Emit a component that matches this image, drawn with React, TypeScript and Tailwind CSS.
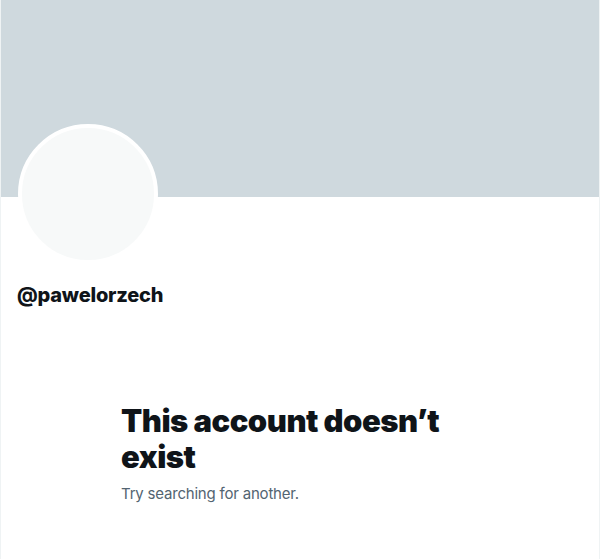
export default function App() {
  return (
    <div
      className="min-h-[559px] w-[600px] border-x border-[#eff3f4] bg-white"
      style={{ fontFamily: "Inter, 'Liberation Sans', sans-serif" }}
    >
      <div className="h-[197px] w-full bg-[#cfd9de]" />

      <div className="px-4">
        <div className="-mt-[73px] flex">
          <div className="ml-[1px] h-[140px] w-[140px] rounded-full border-4 border-white bg-[#f7f9f9]" />
        </div>

        <div className="mt-[19px] text-[20px] font-extrabold leading-6 tracking-[-0.2px] text-[#0f1419]">
          @pawelorzech
        </div>
      </div>

      <div className="mx-auto mt-[96px] w-[358px]">
        <h1 className="text-[31px] font-black leading-[36px] tracking-[-0.5px] text-[#0f1419]">
          This account doesn’t exist
        </h1>
        <p className="mt-[9px] text-[15px] leading-5 tracking-[-0.2px] text-[#536471]">
          Try searching for another.
        </p>
      </div>
    </div>
  );
}
